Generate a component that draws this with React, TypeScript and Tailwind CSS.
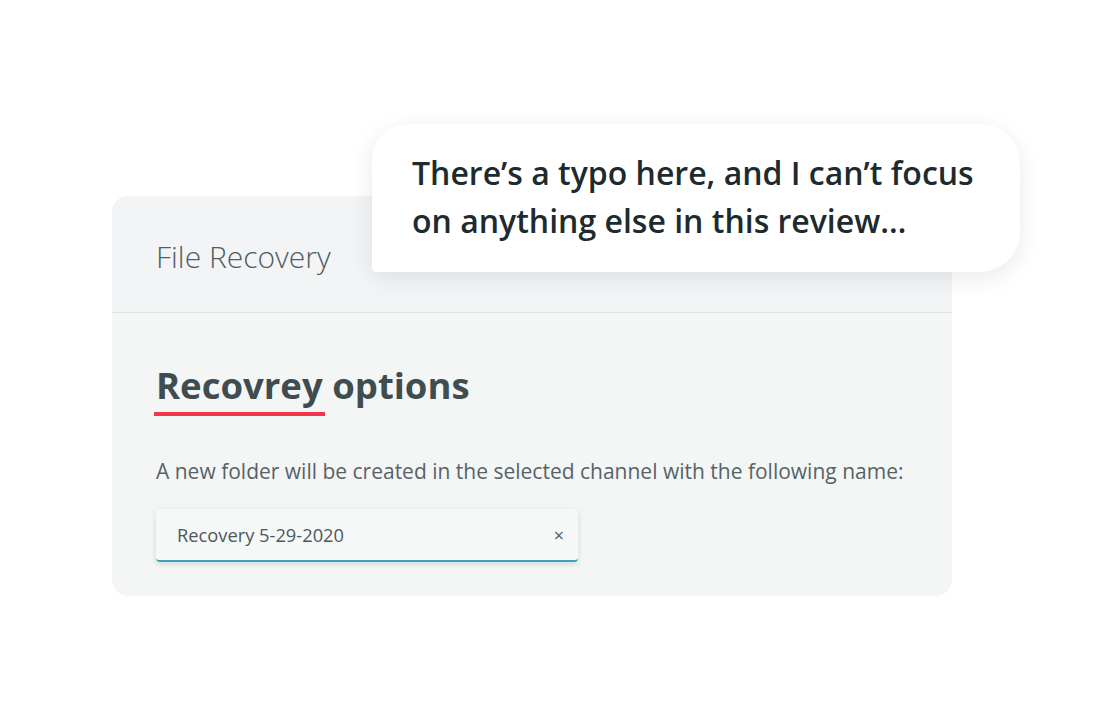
export default function App() {
  return (
    <div className="relative h-[720px] w-[1120px] bg-white font-['Open_Sans',sans-serif]">
      <div className="absolute left-[112px] top-[196px] h-[400px] w-[840px] overflow-hidden rounded-[16px] bg-[#f4f6f6]">
        <div className="flex h-[117px] items-center border-b border-[#e1e4e6] bg-[#f3f4f6] pl-[44px] pt-[4px]">
          <h1 className="text-[30px] font-light text-[#4f5e61]">File Recovery</h1>
        </div>
        <div className="flex flex-col pl-[44px] pt-[49px]">
          <h2 className="text-[36.5px] font-bold leading-[46px] text-[#3f4d50]">
            <span className="relative inline-block">
              Recovrey
              <span className="absolute left-[-2px] right-[-2px] top-[50px] h-[4px] bg-[#f5364a]" />
            </span>{' '}
            options
          </h2>
          <p className="mt-[49px] text-[21px] leading-[28px] text-[#566366]">
            A new folder will be created in the selected channel with the following name:
          </p>
          <div className="mt-[24px] flex h-[53px] w-[422px] items-center justify-between rounded-[4px] border-b-2 border-[#3fa1b6] bg-[#f6f7f7] pl-[21px] pr-[14px] shadow-[0_2px_6px_rgba(0,0,0,0.12)]">
            <span className="text-[18.3px] text-[#4c5a5d]">Recovery 5-29-2020</span>
            <span className="text-[18px] leading-none text-[#555f61]">×</span>
          </div>
        </div>
      </div>
      <div className="absolute left-[372px] top-[124px] h-[148px] w-[648px] rounded-bl-[4px] rounded-br-[40px] rounded-tl-[36px] rounded-tr-[40px] bg-white pl-[40px] pt-[25px] shadow-[0_6px_24px_rgba(0,0,0,0.09)]">
        <p className="text-[32px] font-semibold leading-[48px] text-[#1d2b2e]">
          There’s a typo here, and I can’t focus
          <br />
          on anything else in this review…
        </p>
      </div>
    </div>
  );
}
